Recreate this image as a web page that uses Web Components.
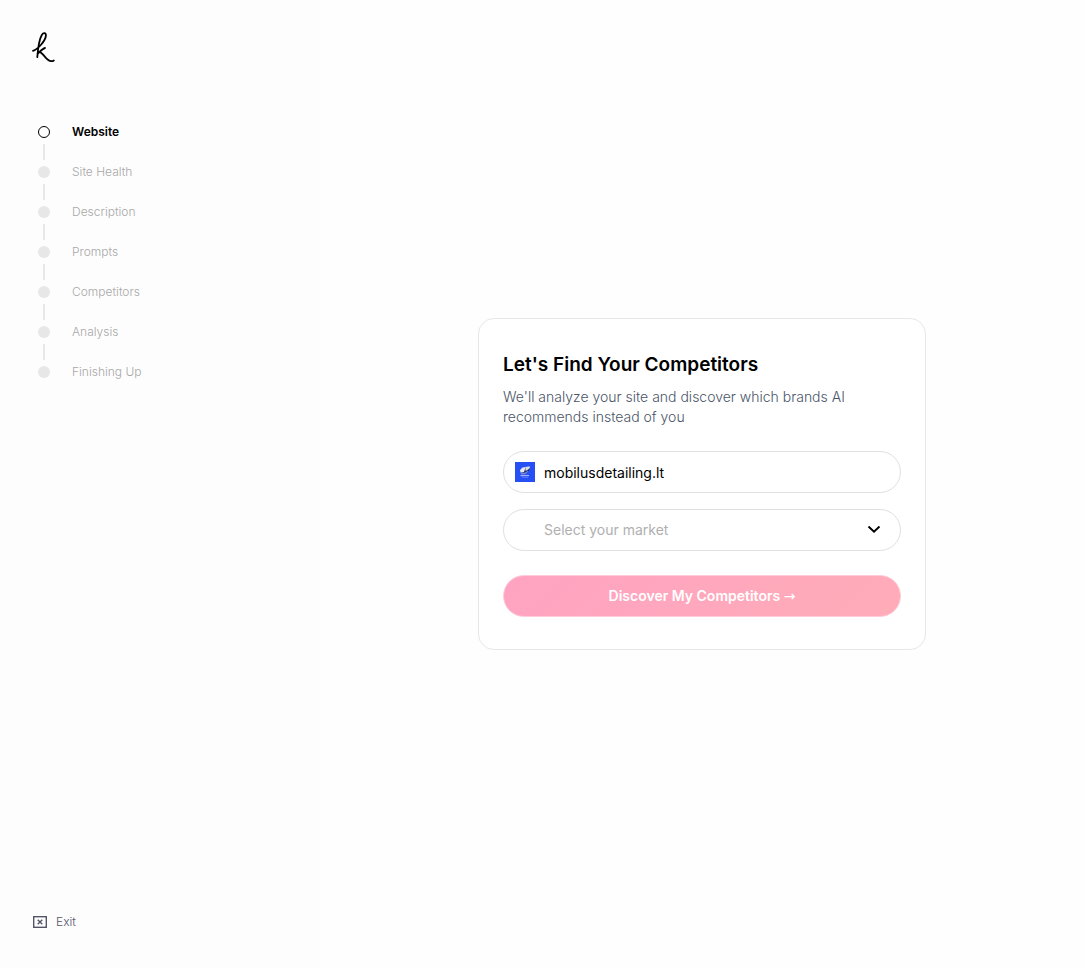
<!DOCTYPE html>
<html lang="en">
<head>
<meta charset="utf-8">
<meta name="viewport" content="width=device-width, initial-scale=1">
<title>Let's Find Your Competitors</title>
<style>
  body { margin: 0; background: #fefefe; color: #000; font-family: Inter, "Liberation Sans", sans-serif; }
</style>
</head>
<body>
<onboarding-page>
  <side-bar slot="side">
    <step-item state="current">Website</step-item>
    <step-item>Site Health</step-item>
    <step-item>Description</step-item>
    <step-item>Prompts</step-item>
    <step-item>Competitors</step-item>
    <step-item>Analysis</step-item>
    <step-item>Finishing Up</step-item>
  </side-bar>
  <competitor-card></competitor-card>
</onboarding-page>

<script>
const define = (name, html) => customElements.define(name, class extends HTMLElement {
  constructor() {
    super();
    this.attachShadow({ mode: 'open' }).innerHTML = html;
  }
});

define('onboarding-page', `
  <style>
    :host { display: flex; min-height: 100vh; }
    aside { flex: 0 0 320px; display: flex; background: #fdfdfd; }
    main { flex: 1; min-width: 0; display: flex; align-items: center; justify-content: center; padding: 24px; box-sizing: border-box; }
  </style>
  <aside><slot name="side"></slot></aside>
  <main><slot></slot></main>`);

define('brand-logo', `
  <style>:host { display: block; } svg { display: block; }</style>
  <svg width="24" height="32" viewBox="0 0 24 32" fill="none" stroke="#000" stroke-width="1.8" stroke-linecap="round" stroke-linejoin="round" role="img" aria-label="Logo">
    <path d="M1 18.800C6 17.200 13.600 8.600 13.900 3.600C14 .4 11.400 .3 9.800 3C7.300 7.200 6 16 5.300 25.200M5.500 22C8 19.600 10.500 16.500 13 16M6.800 19.900C11.800 20.400 13.600 28.800 19.200 29.200C20.400 29.300 21.200 28.900 21.800 28.500"/>
  </svg>`);

define('step-item', `
  <style>
    :host { display: grid; grid-template-columns: 24px 1fr; column-gap: 16px; color: #a8a8a8; font-size: 12px; font-weight: 300; line-height: 24px; }
    :host([state="current"]) { color: #000; font-weight: 600; }
    .dot { width: 12px; height: 12px; box-sizing: border-box; border-radius: 50%; background: #e7e7e7; place-self: center; }
    :host([state="current"]) .dot { background: none; border: 1px solid #000; }
    .line { width: 2px; height: 16px; background: #e7e7e7; justify-self: center; }
    :host(:last-of-type) .line { display: none; }
  </style>
  <span class="dot"></span><span><slot></slot></span>
  <span class="line"></span>`);

define('exit-link', `
  <style>
    a { display: flex; align-items: center; gap: 8px; color: #55556a; text-decoration: none; font-size: 12px; font-weight: 300; line-height: 20px; }
    :host { display: block; }
    svg { display: block; }
  </style>
  <a href="#">
    <svg width="16" height="16" viewBox="0 0 16 16" fill="none" stroke="currentColor" stroke-width="1.4" aria-hidden="true">
      <rect x="1.700" y="2.700" width="12.600" height="10.600"/>
      <path d="M5.700 5.700l4.600 4.600M10.300 5.700l-4.600 4.600"/>
    </svg>
    <span>Exit</span>
  </a>`);

define('side-bar', `
  <style>
    :host { flex: 1; display: flex; flex-direction: column; padding: 32px; padding-bottom: 36px; }
    nav { margin-top: 56px; flex: 1; }
  </style>
  <brand-logo></brand-logo>
  <nav aria-label="Steps"><slot></slot></nav>
  <exit-link></exit-link>`);

define('site-field', `
  <style>
    :host { display: block; }
    label { display: flex; align-items: center; gap: 9px; height: 42px; padding: 0 11px; box-sizing: border-box; border: 1px solid #e0e0e0; border-radius: 21px; background: #fff; }
    svg { flex: none; display: block; }
    input { flex: 1; min-width: 0; border: 0; padding: 2px 0 0; outline: 0; background: none; font: inherit; font-size: 14px; line-height: 20px; color: #000; }
  </style>
  <label>
    <svg width="20" height="20" viewBox="0 0 20 20" aria-hidden="true">
      <path fill="#264ff5" d="M0 0h20v20H0z"/>
      <path fill="#1a2a70" d="M5 8.500l5-3.500 5 .5-1 3.500-5 2.500z"/>
      <path fill="#e9e9ee" d="M5 8l2.500-2.500L11 5l-1 2-1 3-3.500.5z"/>
      <path fill="#d9dce5" d="M10.500 5l4-.8L15 6l-2.500 2-2 1z"/>
      <path fill="#7a8bc9" d="M5.500 11l5-.5 2.500-2 .5.500-3 3.200-4 .3z"/>
      <path fill="#a3b3fa" d="M5.500 13h8.500v1.200H5.500z"/>
      <path fill="#5f7cf8" d="M7 15h6v.8H7z"/>
    </svg>
    <input type="text" aria-label="Website" value="mobilusdetailing.lt">
  </label>`);

define('market-select', `
  <style>
    :host { display: grid; align-items: center; }
    select, svg { grid-area: 1 / 1; }
    select { appearance: none; width: 100%; height: 42px; padding: 0 40px; box-sizing: border-box; border: 1px solid #e0e0e0; border-radius: 21px; background: #fff; color: #b0b0b0; font: inherit; font-size: 14px; line-height: 20px; }
    svg { justify-self: end; margin-right: 19px; pointer-events: none; }
  </style>
  <select aria-label="Market"><option>Select your market</option></select>
  <svg width="16" height="16" viewBox="0 0 16 16" fill="none" stroke="#000" stroke-width="1.900" aria-hidden="true"><path d="M2.500 4.500L8 9.800 13.500 4.500"/></svg>`);

define('primary-button', `
  <style>
    :host { display: block; }
    button { display: block; width: 100%; height: 42px; padding: 0 16px; border: 1px solid #ffcbd8; border-radius: 21px; background: linear-gradient(135deg, #ffa3c2, #ffacb8); color: #fff; font: inherit; font-size: 14px; font-weight: 600; line-height: 20px; }
    ::slotted(.arrow) { font-family: "DejaVu Sans", sans-serif; font-weight: 400; }
  </style>
  <button type="submit"><slot></slot></button>`);

define('competitor-card', `
  <style>
    :host { display: block; width: 100%; max-width: 448px; box-sizing: border-box; padding: 32px 24px; border: 1px solid #e7e7e7; border-radius: 16px; background: #fff; }
    h1 { margin: 0 0 8px; font-size: 19px; line-height: 28px; font-weight: 600; }
    p { margin: 0 0 24px; font-size: 14px; line-height: 20px; font-weight: 300; color: #4a5568; }
    form { display: flex; flex-direction: column; gap: 16px; }
    primary-button { margin-top: 8px; }
  </style>
  <h1>Let's Find Your Competitors</h1>
  <p>We'll analyze your site and discover which brands AI recommends instead of you</p>
  <form>
    <site-field></site-field>
    <market-select></market-select>
    <primary-button>Discover My Competitors <span class="arrow">→</span></primary-button>
  </form>`);
</script>
</body>
</html>
